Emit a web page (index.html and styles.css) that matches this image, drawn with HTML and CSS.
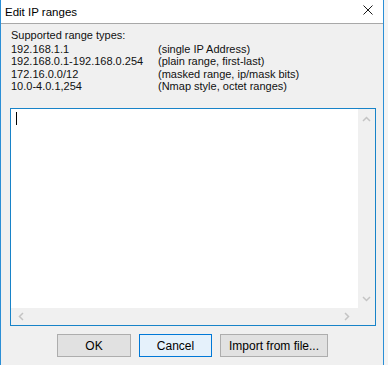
FILE: index.html
```html
<!DOCTYPE html>
<html lang="en">
<head>
  <meta charset="UTF-8" />
  <title>Edit IP ranges</title>
  <link rel="stylesheet" href="styles.css">
</head>
<body>

<div class="screen">
  <div class="dialog">
    <div class="titlebar">
      <span class="title">Edit IP ranges</span>
      <svg class="close" width="10" height="10" viewBox="0 0 10 10">
        <path d="M0.5 0.5 L9.5 9.5 M9.5 0.5 L0.5 9.5" stroke="#1a1a1a" stroke-width="1" fill="none"/>
      </svg>
    </div>

    <div class="client">
      <div class="help">
        <div class="help-head">Supported range types:</div>
        <div class="help-row"><span class="ip">192.168.1.1</span><span>(single IP Address)</span></div>
        <div class="help-row"><span class="ip">192.168.0.1-192.168.0.254</span><span>(plain range, first-last)</span></div>
        <div class="help-row"><span class="ip">172.16.0.0/12</span><span>(masked range, ip/mask bits)</span></div>
        <div class="help-row"><span class="ip">10.0-4.0.1,254</span><span>(Nmap style, octet ranges)</span></div>
      </div>

      <div class="editor">
        <div class="editor-main">
          <div class="edit-area"><span class="caret"></span></div>
          <div class="vscroll">
            <svg width="9" height="6" viewBox="0 0 9 6"><path d="M1 5 L4.5 1.5 L8 5" stroke="#c4c4c4" stroke-width="1.5" fill="none"/></svg>
            <svg width="9" height="6" viewBox="0 0 9 6"><path d="M1 1 L4.5 4.5 L8 1" stroke="#c4c4c4" stroke-width="1.5" fill="none"/></svg>
          </div>
        </div>
        <div class="hscroll">
          <div class="hbar">
            <svg width="6" height="9" viewBox="0 0 6 9"><path d="M5 1 L1.5 4.5 L5 8" stroke="#c4c4c4" stroke-width="1.5" fill="none"/></svg>
            <svg width="6" height="9" viewBox="0 0 6 9"><path d="M1 1 L4.5 4.5 L1 8" stroke="#c4c4c4" stroke-width="1.5" fill="none"/></svg>
          </div>
          <div class="corner"></div>
        </div>
      </div>

      <div class="buttons">
        <button class="btn btn-ok">OK</button>
        <button class="btn btn-default">Cancel</button>
        <button class="btn btn-import">Import from file...</button>
      </div>
    </div>
  </div>
  <div class="behind"></div>
</div>

</body>
</html>
```

FILE: styles.css
```css
body { margin: 0; padding: 0; background: #f0f0f0; font-family: 'Liberation Sans', Arial, sans-serif; color: #000; }
.screen { display: flex; width: 388px; height: 365px; overflow: hidden; }
.dialog { width: 382px; height: 365px; border-left: 1px solid #2b8fd6; border-right: 1px solid #2b8fd6; display: flex; flex-direction: column; background: #f0f0f0; }
.behind { flex: 1; background: #f4f4f4; }

.titlebar { height: 23px; background: #fff; border-bottom: 1px solid #a8a8a8; display: flex; align-items: center; justify-content: space-between; padding: 0 10px 0 4px; }
.title { font-size: 11.5px; color: #000; margin-top: 1px; }
.close { margin-top: -3px; }

.client { padding: 5px 7px 0 9px; display: flex; flex-direction: column; }
.help { font-size: 11px; line-height: 12.3px; padding-left: 1px; color: #111; }
.help-head { margin-bottom: 1.7px; }
.help-row { display: flex; }
.ip { width: 147px; flex-shrink: 0; }

.editor { margin-top: 16px; height: 216px; border: 1px solid #1883c8; background: #fff; display: flex; flex-direction: column; }
.editor-main { flex: 1; display: flex; }
.edit-area { flex: 1; padding: 3px 5px; }
.caret { display: block; width: 1px; height: 13px; background: #000; }
.vscroll { width: 17px; background: #f0f0f0; display: flex; flex-direction: column; justify-content: space-between; align-items: center; padding: 7px 0 6px; }
.hscroll { height: 17px; display: flex; }
.hbar { flex: 1; background: #f0f0f0; display: flex; justify-content: space-between; align-items: center; padding: 0 8px 0 7px; }
.corner { width: 17px; background: #f0f0f0; }

.buttons { display: flex; gap: 8px; margin-top: 8px; padding-left: 47px; }
.btn { height: 23px; padding: 0; font-family: 'Liberation Sans', Arial, sans-serif; font-size: 12px; color: #000; background: #e1e1e1; border: 1px solid #adadad; }
.btn-ok { width: 74px; }
.btn-default { width: 73px; background: #e5f1fb; border-color: #0078d7; }
.btn-import { width: 108px; }
```
